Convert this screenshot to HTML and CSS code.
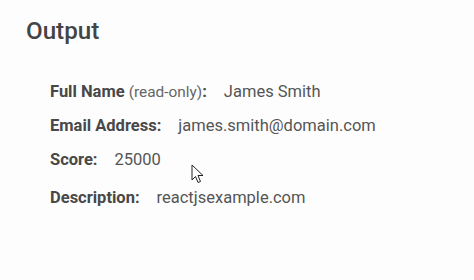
FILE: index.html
```html
<!DOCTYPE html>
<html>
<head>
<meta charset="utf-8">
<link rel="stylesheet" href="styles.css">
</head>
<body>
<div class="page">
  <h2 class="title">Output</h2>
  <div class="list">
    <div class="row"><span class="label">Full Name <span class="note">(read-only)</span>:</span><span class="value">James Smith</span></div>
    <div class="row"><span class="label">Email Address:</span><span class="value">james.smith@domain.com</span></div>
    <div class="row"><span class="label">Score:</span><span class="value">25000</span></div>
    <div class="row row-last"><span class="label">Description:</span><span class="value">reactjsexample.com</span></div>
  </div>
  <svg class="cursor" width="14" height="21" viewBox="0 0 14 21"><path d="M1 1 L1 16 L4.5 12.5 L7 18.5 L9.5 17.5 L7 11.5 L12 11.5 Z" fill="#fff" stroke="#222" stroke-width="1" stroke-linejoin="round"/></svg>
</div>
</body>
</html>
```
FILE: styles.css
```css
html, body { margin: 0; padding: 0; background: #fdfdfd; }
body { font-family: Roboto, "Liberation Sans", sans-serif; color: #444; }
.page { position: relative; width: 474px; height: 280px; padding: 15px 0 0 26px; box-sizing: border-box; }
.title { margin: 0; font-size: 24.2px; font-weight: 500; color: #444; line-height: 32px; }
.list { margin-top: 34px; padding-left: 24px; }
.row { display: flex; align-items: baseline; font-size: 16.5px; line-height: 22px; margin-bottom: 12px; }
.row-last { padding-top: 4px; }
.label { font-weight: 700; color: #484848; }
.note { font-weight: 400; font-size: 15.4px; color: #666; }
.value { margin-left: 17px; color: #555; }
.cursor { position: absolute; left: 191px; top: 164px; }
```
